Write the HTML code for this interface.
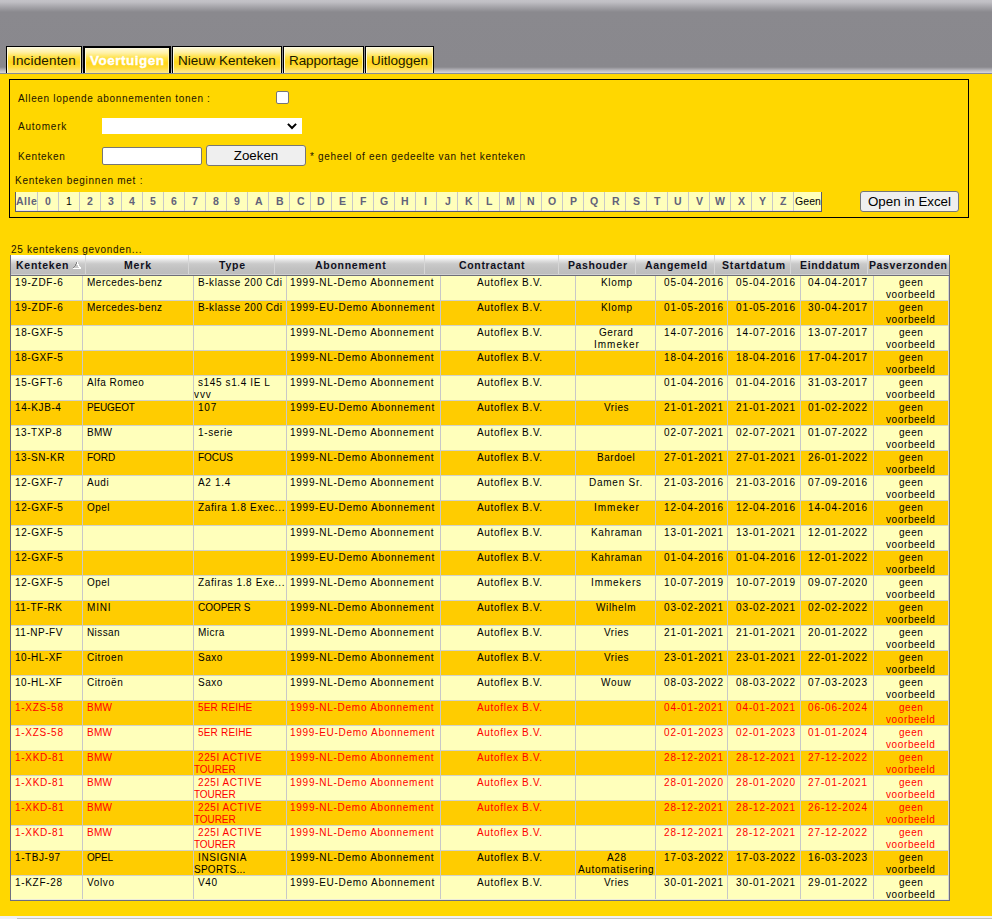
<!DOCTYPE html><html><head><meta charset="utf-8"><style>
*{margin:0;padding:0;box-sizing:border-box}
html,body{width:992px;height:919px;overflow:hidden;background:#ffd700;font-family:"Liberation Sans",sans-serif;color:#000}
.a{position:absolute}
.t{white-space:nowrap}
#hdr{left:0;top:0;width:992px;height:74px;background:linear-gradient(#c3c2c7 0px,#c0bfc4 2px,#8a898e 12px,#89888d 67px,#b3b2b8 70px,#d8d7de 73px);border-bottom:1px solid #868a98}
.tab{top:46px;height:27px;border:1px solid #000;border-bottom:none;background:linear-gradient(#fffbdc 0px,#fff1a8 5px,#ffe24a 10px,#ffd519 15px,#ffdc3c 20px,#ffe88a 25px);box-shadow:inset 1px 1px 0 #fffbe0,inset -1px 0 0 #fff3a0}
.tab.act{border:2px solid #000;border-bottom:none}
#box{left:9px;top:79px;width:960px;height:139px;border:1px solid #000}
.lbl{color:#1a1200}
.red{color:#ff0000}
.hc{color:#101020}
.ltr{top:192px;height:19px;width:21px;border-right:1px solid #c8c8c8}
</style></head><body>
<div id="hdr" class="a"></div>
<div class="a tab" style="left:6px;width:76px"></div>
<div class="a t" style="left:12px;top:53px;font-size:13.5px;letter-spacing:0.159px;line-height:16px;color:#1a1a00">Incidenten</div>
<div class="a tab act" style="left:83px;width:88px"></div>
<div class="a t" style="left:90px;top:53px;font-size:13.5px;letter-spacing:0.486px;line-height:16px;font-weight:bold;color:#fff;-webkit-text-stroke:0.35px #fff">Voertuigen</div>
<div class="a tab" style="left:172px;width:110px"></div>
<div class="a t" style="left:178px;top:53px;font-size:13.5px;letter-spacing:-0.033px;line-height:16px;color:#1a1a00">Nieuw Kenteken</div>
<div class="a tab" style="left:283px;width:81px"></div>
<div class="a t" style="left:289px;top:53px;font-size:13.5px;letter-spacing:-0.107px;line-height:16px;color:#1a1a00">Rapportage</div>
<div class="a tab" style="left:365px;width:69px"></div>
<div class="a t" style="left:371px;top:53px;font-size:13.5px;letter-spacing:0.004px;line-height:16px;color:#1a1a00">Uitloggen</div>
<div id="box" class="a"></div>
<div class="a t lbl" style="left:18px;top:93px;font-size:10px;letter-spacing:0.671px;line-height:12px">Alleen lopende abonnementen tonen :</div>
<div class="a" style="left:276px;top:91px;width:13px;height:13px;border:1px solid #767676;border-radius:2px;background:#fff"></div>
<div class="a t lbl" style="left:18px;top:121px;font-size:10px;letter-spacing:0.783px;line-height:12px">Automerk</div>
<div class="a" style="left:102px;top:118px;width:200px;height:16px;background:#fff"></div>
<svg class="a" style="left:287px;top:122px" width="11" height="8" viewBox="0 0 11 8"><path d="M0.9 1.9 L5 6 L9.1 1.9" fill="none" stroke="#000" stroke-width="2"/></svg>
<div class="a t lbl" style="left:18px;top:151px;font-size:10px;letter-spacing:0.634px;line-height:12px">Kenteken</div>
<div class="a" style="left:102px;top:147px;width:100px;height:18px;border:1px solid #767676;border-radius:2px;background:#fff"></div>
<div class="a" style="left:206px;top:145px;width:100px;height:21px;border:1px solid #767676;border-radius:3px;background:#efefef;font-size:13.33px;line-height:19px;text-align:center">Zoeken</div>
<div class="a t lbl" style="left:310px;top:151px;font-size:10px;letter-spacing:0.694px;line-height:12px">* geheel of een gedeelte van het kenteken</div>
<div class="a t lbl" style="left:15px;top:175px;font-size:10px;letter-spacing:0.738px;line-height:12px">Kenteken beginnen met :</div>
<div class="a" style="left:15px;top:192px;width:807px;height:20px;background:#ffffbb;border-left:1px solid #5a5a70;border-bottom:1px solid #5a5a70;border-right:1px solid #5a5a70;box-shadow:inset 0 -1px 0 #e8e4f0"></div>
<div class="a ltr" style="left:16px;width:22px"></div>
<div class="a t" style="left:16px;top:195px;font-size:10.5px;letter-spacing:0.496px;line-height:12px;font-weight:bold;color:#62627a">Alle</div>
<div class="a ltr" style="left:38px"></div>
<div class="a t" style="left:45px;top:195px;font-size:10.5px;letter-spacing:1.270px;line-height:12px;font-weight:bold;color:#62627a">0</div>
<div class="a ltr" style="left:59px"></div>
<div class="a t" style="left:66px;top:195px;font-size:10.5px;letter-spacing:0.520px;line-height:12px;color:#000">1</div>
<div class="a ltr" style="left:80px"></div>
<div class="a t" style="left:87px;top:195px;font-size:10.5px;letter-spacing:1.270px;line-height:12px;font-weight:bold;color:#62627a">2</div>
<div class="a ltr" style="left:101px"></div>
<div class="a t" style="left:108px;top:195px;font-size:10.5px;letter-spacing:1.270px;line-height:12px;font-weight:bold;color:#62627a">3</div>
<div class="a ltr" style="left:122px"></div>
<div class="a t" style="left:129px;top:195px;font-size:10.5px;letter-spacing:1.270px;line-height:12px;font-weight:bold;color:#62627a">4</div>
<div class="a ltr" style="left:143px"></div>
<div class="a t" style="left:150px;top:195px;font-size:10.5px;letter-spacing:1.270px;line-height:12px;font-weight:bold;color:#62627a">5</div>
<div class="a ltr" style="left:164px"></div>
<div class="a t" style="left:171px;top:195px;font-size:10.5px;letter-spacing:1.270px;line-height:12px;font-weight:bold;color:#62627a">6</div>
<div class="a ltr" style="left:185px"></div>
<div class="a t" style="left:192px;top:195px;font-size:10.5px;letter-spacing:1.270px;line-height:12px;font-weight:bold;color:#62627a">7</div>
<div class="a ltr" style="left:206px"></div>
<div class="a t" style="left:213px;top:195px;font-size:10.5px;letter-spacing:1.270px;line-height:12px;font-weight:bold;color:#62627a">8</div>
<div class="a ltr" style="left:227px"></div>
<div class="a t" style="left:234px;top:195px;font-size:10.5px;letter-spacing:1.270px;line-height:12px;font-weight:bold;color:#62627a">9</div>
<div class="a ltr" style="left:248px"></div>
<div class="a t" style="left:255px;top:195px;font-size:10.5px;letter-spacing:0.177px;line-height:12px;font-weight:bold;color:#62627a">A</div>
<div class="a ltr" style="left:269px"></div>
<div class="a t" style="left:276px;top:195px;font-size:10.5px;letter-spacing:0.037px;line-height:12px;font-weight:bold;color:#62627a">B</div>
<div class="a ltr" style="left:290px"></div>
<div class="a t" style="left:297px;top:195px;font-size:10.5px;letter-spacing:-0.343px;line-height:12px;font-weight:bold;color:#62627a">C</div>
<div class="a ltr" style="left:311px"></div>
<div class="a t" style="left:317px;top:195px;font-size:10.5px;letter-spacing:0.717px;line-height:12px;font-weight:bold;color:#62627a">D</div>
<div class="a ltr" style="left:332px"></div>
<div class="a t" style="left:339px;top:195px;font-size:10.5px;letter-spacing:-0.173px;line-height:12px;font-weight:bold;color:#62627a">E</div>
<div class="a ltr" style="left:353px"></div>
<div class="a t" style="left:360px;top:195px;font-size:10.5px;letter-spacing:0.086px;line-height:12px;font-weight:bold;color:#62627a">F</div>
<div class="a ltr" style="left:374px"></div>
<div class="a t" style="left:380px;top:195px;font-size:10.5px;letter-spacing:-0.057px;line-height:12px;font-weight:bold;color:#62627a">G</div>
<div class="a ltr" style="left:395px"></div>
<div class="a t" style="left:401px;top:195px;font-size:10.5px;letter-spacing:0.787px;line-height:12px;font-weight:bold;color:#62627a">H</div>
<div class="a ltr" style="left:416px"></div>
<div class="a t" style="left:424px;top:195px;font-size:10.5px;letter-spacing:2.543px;line-height:12px;font-weight:bold;color:#62627a">I</div>
<div class="a ltr" style="left:437px"></div>
<div class="a t" style="left:445px;top:195px;font-size:10.5px;letter-spacing:-0.290px;line-height:12px;font-weight:bold;color:#62627a">J</div>
<div class="a ltr" style="left:458px"></div>
<div class="a t" style="left:465px;top:195px;font-size:10.5px;letter-spacing:0.127px;line-height:12px;font-weight:bold;color:#62627a">K</div>
<div class="a ltr" style="left:479px"></div>
<div class="a t" style="left:486px;top:195px;font-size:10.5px;letter-spacing:-0.044px;line-height:12px;font-weight:bold;color:#62627a">L</div>
<div class="a ltr" style="left:500px"></div>
<div class="a t" style="left:506px;top:195px;font-size:10.5px;letter-spacing:0.733px;line-height:12px;font-weight:bold;color:#62627a">M</div>
<div class="a ltr" style="left:521px"></div>
<div class="a t" style="left:527px;top:195px;font-size:10.5px;letter-spacing:0.887px;line-height:12px;font-weight:bold;color:#62627a">N</div>
<div class="a ltr" style="left:542px"></div>
<div class="a t" style="left:548px;top:195px;font-size:10.5px;letter-spacing:0.333px;line-height:12px;font-weight:bold;color:#62627a">O</div>
<div class="a ltr" style="left:563px"></div>
<div class="a t" style="left:570px;top:195px;font-size:10.5px;letter-spacing:0.327px;line-height:12px;font-weight:bold;color:#62627a">P</div>
<div class="a ltr" style="left:584px"></div>
<div class="a t" style="left:590px;top:195px;font-size:10.5px;letter-spacing:0.333px;line-height:12px;font-weight:bold;color:#62627a">Q</div>
<div class="a ltr" style="left:605px"></div>
<div class="a t" style="left:612px;top:195px;font-size:10.5px;letter-spacing:0.237px;line-height:12px;font-weight:bold;color:#62627a">R</div>
<div class="a ltr" style="left:626px"></div>
<div class="a t" style="left:633px;top:195px;font-size:10.5px;letter-spacing:0.097px;line-height:12px;font-weight:bold;color:#62627a">S</div>
<div class="a ltr" style="left:647px"></div>
<div class="a t" style="left:654px;top:195px;font-size:10.5px;letter-spacing:0.406px;line-height:12px;font-weight:bold;color:#62627a">T</div>
<div class="a ltr" style="left:668px"></div>
<div class="a t" style="left:674px;top:195px;font-size:10.5px;letter-spacing:0.537px;line-height:12px;font-weight:bold;color:#62627a">U</div>
<div class="a ltr" style="left:689px"></div>
<div class="a t" style="left:696px;top:195px;font-size:10.5px;letter-spacing:0.637px;line-height:12px;font-weight:bold;color:#62627a">V</div>
<div class="a ltr" style="left:710px"></div>
<div class="a t" style="left:715px;top:195px;font-size:10.5px;letter-spacing:1.370px;line-height:12px;font-weight:bold;color:#62627a">W</div>
<div class="a ltr" style="left:731px"></div>
<div class="a t" style="left:738px;top:195px;font-size:10.5px;letter-spacing:0.697px;line-height:12px;font-weight:bold;color:#62627a">X</div>
<div class="a ltr" style="left:752px"></div>
<div class="a t" style="left:759px;top:195px;font-size:10.5px;letter-spacing:0.367px;line-height:12px;font-weight:bold;color:#62627a">Y</div>
<div class="a ltr" style="left:773px"></div>
<div class="a t" style="left:780px;top:195px;font-size:10.5px;letter-spacing:0.506px;line-height:12px;font-weight:bold;color:#62627a">Z</div>
<div class="a t" style="left:795px;top:195px;font-size:10.5px;letter-spacing:0.078px;line-height:12px;color:#000">Geen</div>
<div class="a" style="left:860px;top:191px;width:99px;height:21px;border:1px solid #767676;border-radius:3px;background:#efefef;font-size:13.33px;line-height:19px;text-align:center">Open in Excel</div>
<div class="a t lbl" style="left:11px;top:244px;font-size:10px;letter-spacing:0.696px;line-height:12px">25 kentekens gevonden...</div>
<div class="a" style="left:10px;top:255px;width:940px;height:21px;background:linear-gradient(#ffffff 0px,#fbfbfb 3px,#dedede 6px,#c9c9c9 9px,#c1c1c1 14px,#bdbdbd 19px);border-left:1px solid #6e6e80;border-right:1px solid #6e6e80;border-bottom:1px solid #6e6e78;box-shadow:inset 0 -1px 0 #d0d0d0"></div>
<div class="a" style="left:85px;top:255px;width:1px;height:19px;background:#d6d6d6"></div>
<div class="a" style="left:188px;top:255px;width:1px;height:19px;background:#d6d6d6"></div>
<div class="a" style="left:274px;top:255px;width:1px;height:19px;background:#d6d6d6"></div>
<div class="a" style="left:424px;top:255px;width:1px;height:19px;background:#d6d6d6"></div>
<div class="a" style="left:558px;top:255px;width:1px;height:19px;background:#d6d6d6"></div>
<div class="a" style="left:635px;top:255px;width:1px;height:19px;background:#d6d6d6"></div>
<div class="a" style="left:714px;top:255px;width:1px;height:19px;background:#d6d6d6"></div>
<div class="a" style="left:790px;top:255px;width:1px;height:19px;background:#d6d6d6"></div>
<div class="a" style="left:867px;top:255px;width:1px;height:19px;background:#d6d6d6"></div>
<div class="a t hc" style="left:16px;top:259px;font-size:10.5px;letter-spacing:0.733px;line-height:12px;font-weight:bold">Kenteken</div>
<div class="a t hc" style="left:124px;top:259px;font-size:10.5px;letter-spacing:0.820px;line-height:12px;font-weight:bold">Merk</div>
<div class="a t hc" style="left:219px;top:259px;font-size:10.5px;letter-spacing:0.808px;line-height:12px;font-weight:bold">Type</div>
<div class="a t hc" style="left:315px;top:259px;font-size:10.5px;letter-spacing:0.724px;line-height:12px;font-weight:bold">Abonnement</div>
<div class="a t hc" style="left:459px;top:259px;font-size:10.5px;letter-spacing:0.666px;line-height:12px;font-weight:bold">Contractant</div>
<div class="a t hc" style="left:568px;top:259px;font-size:10.5px;letter-spacing:0.598px;line-height:12px;font-weight:bold">Pashouder</div>
<div class="a t hc" style="left:645px;top:259px;font-size:10.5px;letter-spacing:0.692px;line-height:12px;font-weight:bold">Aangemeld</div>
<div class="a t hc" style="left:722px;top:259px;font-size:10.5px;letter-spacing:0.838px;line-height:12px;font-weight:bold">Startdatum</div>
<div class="a t hc" style="left:800px;top:259px;font-size:10.5px;letter-spacing:0.671px;line-height:12px;font-weight:bold">Einddatum</div>
<div class="a t hc" style="left:869px;top:259px;font-size:10.5px;letter-spacing:0.621px;line-height:12px;font-weight:bold">Pasverzonden</div>
<svg class="a" style="left:72px;top:261px" width="10" height="9" shape-rendering="crispEdges"><rect x="4" y="1" width="1" height="2" fill="#858585"/><rect x="5" y="1" width="1" height="2" fill="#ffffff"/><rect x="3" y="3" width="1" height="1" fill="#858585"/><rect x="4" y="3" width="1" height="1" fill="#c8c8c8"/><rect x="5" y="3" width="2" height="1" fill="#ffffff"/><rect x="3" y="4" width="1" height="1" fill="#858585"/><rect x="4" y="4" width="2" height="1" fill="#c8c8c8"/><rect x="6" y="4" width="1" height="1" fill="#ffffff"/><rect x="2" y="5" width="1" height="1" fill="#858585"/><rect x="3" y="5" width="3" height="1" fill="#c8c8c8"/><rect x="6" y="5" width="2" height="1" fill="#ffffff"/><rect x="1" y="6" width="1" height="1" fill="#858585"/><rect x="2" y="6" width="5" height="1" fill="#c8c8c8"/><rect x="7" y="6" width="2" height="1" fill="#ffffff"/><rect x="1" y="7" width="8" height="1" fill="#ffffff"/></svg>
<div class="a" style="left:10px;top:276px;width:940px;height:625px;border:1px solid #6e6e80;border-top:none"></div>
<div class="a" style="left:11px;top:276px;width:938px;height:25px;background:#ffffbb;border-bottom:1px solid #d2d2c8"></div>
<div class="a t" style="left:15px;top:277px;font-size:10px;letter-spacing:0.711px;line-height:12px">19-ZDF-6</div>
<div class="a t" style="left:87px;top:277px;font-size:10px;letter-spacing:0.509px;line-height:12px">Mercedes-benz</div>
<div class="a t" style="left:198px;top:277px;font-size:10px;letter-spacing:0.558px;line-height:12px">B-klasse 200 Cdi</div>
<div class="a t" style="left:290px;top:277px;font-size:10px;letter-spacing:0.738px;line-height:12px">1999-NL-Demo Abonnement</div>
<div class="a t" style="left:477px;top:277px;font-size:10px;letter-spacing:0.687px;line-height:12px">Autoflex B.V.</div>
<div class="a t" style="left:601px;top:277px;font-size:10px;letter-spacing:0.671px;line-height:12px">Klomp</div>
<div class="a t" style="left:664px;top:277px;font-size:10px;letter-spacing:0.881px;line-height:12px">05-04-2016</div>
<div class="a t" style="left:736px;top:277px;font-size:10px;letter-spacing:0.881px;line-height:12px">05-04-2016</div>
<div class="a t" style="left:808px;top:277px;font-size:10px;letter-spacing:0.881px;line-height:12px">04-04-2017</div>
<div class="a t" style="left:899px;top:277px;font-size:10px;letter-spacing:0.558px;line-height:12px">geen</div>
<div class="a t" style="left:886px;top:289px;font-size:10px;letter-spacing:0.614px;line-height:12px">voorbeeld</div>
<div class="a" style="left:11px;top:301px;width:938px;height:25px;background:#ffcc00;border-bottom:1px solid #d2d2c8"></div>
<div class="a t" style="left:15px;top:302px;font-size:10px;letter-spacing:0.711px;line-height:12px">19-ZDF-6</div>
<div class="a t" style="left:87px;top:302px;font-size:10px;letter-spacing:0.509px;line-height:12px">Mercedes-benz</div>
<div class="a t" style="left:198px;top:302px;font-size:10px;letter-spacing:0.558px;line-height:12px">B-klasse 200 Cdi</div>
<div class="a t" style="left:290px;top:302px;font-size:10px;letter-spacing:0.716px;line-height:12px">1999-EU-Demo Abonnement</div>
<div class="a t" style="left:477px;top:302px;font-size:10px;letter-spacing:0.687px;line-height:12px">Autoflex B.V.</div>
<div class="a t" style="left:601px;top:302px;font-size:10px;letter-spacing:0.671px;line-height:12px">Klomp</div>
<div class="a t" style="left:664px;top:302px;font-size:10px;letter-spacing:0.881px;line-height:12px">01-05-2016</div>
<div class="a t" style="left:736px;top:302px;font-size:10px;letter-spacing:0.881px;line-height:12px">01-05-2016</div>
<div class="a t" style="left:808px;top:302px;font-size:10px;letter-spacing:0.881px;line-height:12px">30-04-2017</div>
<div class="a t" style="left:899px;top:302px;font-size:10px;letter-spacing:0.558px;line-height:12px">geen</div>
<div class="a t" style="left:886px;top:314px;font-size:10px;letter-spacing:0.614px;line-height:12px">voorbeeld</div>
<div class="a" style="left:11px;top:326px;width:938px;height:25px;background:#ffffbb;border-bottom:1px solid #d2d2c8"></div>
<div class="a t" style="left:15px;top:327px;font-size:10px;letter-spacing:0.576px;line-height:12px">18-GXF-5</div>
<div class="a t" style="left:290px;top:327px;font-size:10px;letter-spacing:0.738px;line-height:12px">1999-NL-Demo Abonnement</div>
<div class="a t" style="left:477px;top:327px;font-size:10px;letter-spacing:0.687px;line-height:12px">Autoflex B.V.</div>
<div class="a t" style="left:599px;top:327px;font-size:10px;letter-spacing:0.561px;line-height:12px">Gerard</div>
<div class="a t" style="left:594px;top:339px;font-size:10px;letter-spacing:0.984px;line-height:12px">Immeker</div>
<div class="a t" style="left:664px;top:327px;font-size:10px;letter-spacing:0.881px;line-height:12px">14-07-2016</div>
<div class="a t" style="left:736px;top:327px;font-size:10px;letter-spacing:0.881px;line-height:12px">14-07-2016</div>
<div class="a t" style="left:808px;top:327px;font-size:10px;letter-spacing:0.881px;line-height:12px">13-07-2017</div>
<div class="a t" style="left:899px;top:327px;font-size:10px;letter-spacing:0.558px;line-height:12px">geen</div>
<div class="a t" style="left:886px;top:339px;font-size:10px;letter-spacing:0.614px;line-height:12px">voorbeeld</div>
<div class="a" style="left:11px;top:351px;width:938px;height:25px;background:#ffcc00;border-bottom:1px solid #d2d2c8"></div>
<div class="a t" style="left:15px;top:352px;font-size:10px;letter-spacing:0.576px;line-height:12px">18-GXF-5</div>
<div class="a t" style="left:290px;top:352px;font-size:10px;letter-spacing:0.738px;line-height:12px">1999-NL-Demo Abonnement</div>
<div class="a t" style="left:477px;top:352px;font-size:10px;letter-spacing:0.687px;line-height:12px">Autoflex B.V.</div>
<div class="a t" style="left:664px;top:352px;font-size:10px;letter-spacing:0.881px;line-height:12px">18-04-2016</div>
<div class="a t" style="left:736px;top:352px;font-size:10px;letter-spacing:0.881px;line-height:12px">18-04-2016</div>
<div class="a t" style="left:808px;top:352px;font-size:10px;letter-spacing:0.881px;line-height:12px">17-04-2017</div>
<div class="a t" style="left:899px;top:352px;font-size:10px;letter-spacing:0.558px;line-height:12px">geen</div>
<div class="a t" style="left:886px;top:364px;font-size:10px;letter-spacing:0.614px;line-height:12px">voorbeeld</div>
<div class="a" style="left:11px;top:376px;width:938px;height:25px;background:#ffffbb;border-bottom:1px solid #d2d2c8"></div>
<div class="a t" style="left:15px;top:377px;font-size:10px;letter-spacing:0.629px;line-height:12px">15-GFT-6</div>
<div class="a t" style="left:87px;top:377px;font-size:10px;letter-spacing:0.516px;line-height:12px">Alfa Romeo</div>
<div class="a t" style="left:198px;top:377px;font-size:10px;letter-spacing:0.614px;line-height:12px">s145 s1.4 IE L</div>
<div class="a t" style="left:194px;top:389px;font-size:10px;letter-spacing:0.920px;line-height:12px">vvv</div>
<div class="a t" style="left:290px;top:377px;font-size:10px;letter-spacing:0.738px;line-height:12px">1999-NL-Demo Abonnement</div>
<div class="a t" style="left:477px;top:377px;font-size:10px;letter-spacing:0.687px;line-height:12px">Autoflex B.V.</div>
<div class="a t" style="left:664px;top:377px;font-size:10px;letter-spacing:0.881px;line-height:12px">01-04-2016</div>
<div class="a t" style="left:736px;top:377px;font-size:10px;letter-spacing:0.881px;line-height:12px">01-04-2016</div>
<div class="a t" style="left:808px;top:377px;font-size:10px;letter-spacing:0.881px;line-height:12px">31-03-2017</div>
<div class="a t" style="left:899px;top:377px;font-size:10px;letter-spacing:0.558px;line-height:12px">geen</div>
<div class="a t" style="left:886px;top:389px;font-size:10px;letter-spacing:0.614px;line-height:12px">voorbeeld</div>
<div class="a" style="left:11px;top:401px;width:938px;height:25px;background:#ffcc00;border-bottom:1px solid #d2d2c8"></div>
<div class="a t" style="left:15px;top:402px;font-size:10px;letter-spacing:0.602px;line-height:12px">14-KJB-4</div>
<div class="a t" style="left:87px;top:402px;font-size:10px;letter-spacing:-0.161px;line-height:12px">PEUGEOT</div>
<div class="a t" style="left:198px;top:402px;font-size:10px;letter-spacing:0.798px;line-height:12px">107</div>
<div class="a t" style="left:290px;top:402px;font-size:10px;letter-spacing:0.716px;line-height:12px">1999-EU-Demo Abonnement</div>
<div class="a t" style="left:477px;top:402px;font-size:10px;letter-spacing:0.687px;line-height:12px">Autoflex B.V.</div>
<div class="a t" style="left:604px;top:402px;font-size:10px;letter-spacing:0.522px;line-height:12px">Vries</div>
<div class="a t" style="left:664px;top:402px;font-size:10px;letter-spacing:0.881px;line-height:12px">21-01-2021</div>
<div class="a t" style="left:736px;top:402px;font-size:10px;letter-spacing:0.881px;line-height:12px">21-01-2021</div>
<div class="a t" style="left:808px;top:402px;font-size:10px;letter-spacing:0.881px;line-height:12px">01-02-2022</div>
<div class="a t" style="left:899px;top:402px;font-size:10px;letter-spacing:0.558px;line-height:12px">geen</div>
<div class="a t" style="left:886px;top:414px;font-size:10px;letter-spacing:0.614px;line-height:12px">voorbeeld</div>
<div class="a" style="left:11px;top:426px;width:938px;height:25px;background:#ffffbb;border-bottom:1px solid #d2d2c8"></div>
<div class="a t" style="left:15px;top:427px;font-size:10px;letter-spacing:0.551px;line-height:12px">13-TXP-8</div>
<div class="a t" style="left:87px;top:427px;font-size:10px;letter-spacing:0.247px;line-height:12px">BMW</div>
<div class="a t" style="left:198px;top:427px;font-size:10px;letter-spacing:0.639px;line-height:12px">1-serie</div>
<div class="a t" style="left:290px;top:427px;font-size:10px;letter-spacing:0.738px;line-height:12px">1999-NL-Demo Abonnement</div>
<div class="a t" style="left:477px;top:427px;font-size:10px;letter-spacing:0.687px;line-height:12px">Autoflex B.V.</div>
<div class="a t" style="left:664px;top:427px;font-size:10px;letter-spacing:0.881px;line-height:12px">02-07-2021</div>
<div class="a t" style="left:736px;top:427px;font-size:10px;letter-spacing:0.881px;line-height:12px">02-07-2021</div>
<div class="a t" style="left:808px;top:427px;font-size:10px;letter-spacing:0.881px;line-height:12px">01-07-2022</div>
<div class="a t" style="left:899px;top:427px;font-size:10px;letter-spacing:0.558px;line-height:12px">geen</div>
<div class="a t" style="left:886px;top:439px;font-size:10px;letter-spacing:0.614px;line-height:12px">voorbeeld</div>
<div class="a" style="left:11px;top:451px;width:938px;height:25px;background:#ffcc00;border-bottom:1px solid #d2d2c8"></div>
<div class="a t" style="left:15px;top:452px;font-size:10px;letter-spacing:0.554px;line-height:12px">13-SN-KR</div>
<div class="a t" style="left:87px;top:452px;font-size:10px;letter-spacing:-0.013px;line-height:12px">FORD</div>
<div class="a t" style="left:198px;top:452px;font-size:10px;letter-spacing:-0.048px;line-height:12px">FOCUS</div>
<div class="a t" style="left:290px;top:452px;font-size:10px;letter-spacing:0.738px;line-height:12px">1999-NL-Demo Abonnement</div>
<div class="a t" style="left:477px;top:452px;font-size:10px;letter-spacing:0.687px;line-height:12px">Autoflex B.V.</div>
<div class="a t" style="left:597px;top:452px;font-size:10px;letter-spacing:0.525px;line-height:12px">Bardoel</div>
<div class="a t" style="left:664px;top:452px;font-size:10px;letter-spacing:0.881px;line-height:12px">27-01-2021</div>
<div class="a t" style="left:736px;top:452px;font-size:10px;letter-spacing:0.881px;line-height:12px">27-01-2021</div>
<div class="a t" style="left:808px;top:452px;font-size:10px;letter-spacing:0.881px;line-height:12px">26-01-2022</div>
<div class="a t" style="left:899px;top:452px;font-size:10px;letter-spacing:0.558px;line-height:12px">geen</div>
<div class="a t" style="left:886px;top:464px;font-size:10px;letter-spacing:0.614px;line-height:12px">voorbeeld</div>
<div class="a" style="left:11px;top:476px;width:938px;height:25px;background:#ffffbb;border-bottom:1px solid #d2d2c8"></div>
<div class="a t" style="left:15px;top:477px;font-size:10px;letter-spacing:0.576px;line-height:12px">12-GXF-7</div>
<div class="a t" style="left:87px;top:477px;font-size:10px;letter-spacing:0.531px;line-height:12px">Audi</div>
<div class="a t" style="left:198px;top:477px;font-size:10px;letter-spacing:0.695px;line-height:12px">A2 1.4</div>
<div class="a t" style="left:290px;top:477px;font-size:10px;letter-spacing:0.738px;line-height:12px">1999-NL-Demo Abonnement</div>
<div class="a t" style="left:477px;top:477px;font-size:10px;letter-spacing:0.687px;line-height:12px">Autoflex B.V.</div>
<div class="a t" style="left:589px;top:477px;font-size:10px;letter-spacing:0.752px;line-height:12px">Damen Sr.</div>
<div class="a t" style="left:664px;top:477px;font-size:10px;letter-spacing:0.881px;line-height:12px">21-03-2016</div>
<div class="a t" style="left:736px;top:477px;font-size:10px;letter-spacing:0.881px;line-height:12px">21-03-2016</div>
<div class="a t" style="left:808px;top:477px;font-size:10px;letter-spacing:0.881px;line-height:12px">07-09-2016</div>
<div class="a t" style="left:899px;top:477px;font-size:10px;letter-spacing:0.558px;line-height:12px">geen</div>
<div class="a t" style="left:886px;top:489px;font-size:10px;letter-spacing:0.614px;line-height:12px">voorbeeld</div>
<div class="a" style="left:11px;top:501px;width:938px;height:25px;background:#ffcc00;border-bottom:1px solid #d2d2c8"></div>
<div class="a t" style="left:15px;top:502px;font-size:10px;letter-spacing:0.576px;line-height:12px">12-GXF-5</div>
<div class="a t" style="left:87px;top:502px;font-size:10px;letter-spacing:0.419px;line-height:12px">Opel</div>
<div class="a t" style="left:198px;top:502px;font-size:10px;letter-spacing:0.641px;line-height:12px">Zafira 1.8 Exec...</div>
<div class="a t" style="left:290px;top:502px;font-size:10px;letter-spacing:0.716px;line-height:12px">1999-EU-Demo Abonnement</div>
<div class="a t" style="left:477px;top:502px;font-size:10px;letter-spacing:0.687px;line-height:12px">Autoflex B.V.</div>
<div class="a t" style="left:594px;top:502px;font-size:10px;letter-spacing:0.984px;line-height:12px">Immeker</div>
<div class="a t" style="left:664px;top:502px;font-size:10px;letter-spacing:0.881px;line-height:12px">12-04-2016</div>
<div class="a t" style="left:736px;top:502px;font-size:10px;letter-spacing:0.881px;line-height:12px">12-04-2016</div>
<div class="a t" style="left:808px;top:502px;font-size:10px;letter-spacing:0.881px;line-height:12px">14-04-2016</div>
<div class="a t" style="left:899px;top:502px;font-size:10px;letter-spacing:0.558px;line-height:12px">geen</div>
<div class="a t" style="left:886px;top:514px;font-size:10px;letter-spacing:0.614px;line-height:12px">voorbeeld</div>
<div class="a" style="left:11px;top:526px;width:938px;height:25px;background:#ffffbb;border-bottom:1px solid #d2d2c8"></div>
<div class="a t" style="left:15px;top:527px;font-size:10px;letter-spacing:0.576px;line-height:12px">12-GXF-5</div>
<div class="a t" style="left:290px;top:527px;font-size:10px;letter-spacing:0.738px;line-height:12px">1999-NL-Demo Abonnement</div>
<div class="a t" style="left:477px;top:527px;font-size:10px;letter-spacing:0.687px;line-height:12px">Autoflex B.V.</div>
<div class="a t" style="left:591px;top:527px;font-size:10px;letter-spacing:0.685px;line-height:12px">Kahraman</div>
<div class="a t" style="left:664px;top:527px;font-size:10px;letter-spacing:0.881px;line-height:12px">13-01-2021</div>
<div class="a t" style="left:736px;top:527px;font-size:10px;letter-spacing:0.881px;line-height:12px">13-01-2021</div>
<div class="a t" style="left:808px;top:527px;font-size:10px;letter-spacing:0.881px;line-height:12px">12-01-2022</div>
<div class="a t" style="left:899px;top:527px;font-size:10px;letter-spacing:0.558px;line-height:12px">geen</div>
<div class="a t" style="left:886px;top:539px;font-size:10px;letter-spacing:0.614px;line-height:12px">voorbeeld</div>
<div class="a" style="left:11px;top:551px;width:938px;height:25px;background:#ffcc00;border-bottom:1px solid #d2d2c8"></div>
<div class="a t" style="left:15px;top:552px;font-size:10px;letter-spacing:0.576px;line-height:12px">12-GXF-5</div>
<div class="a t" style="left:290px;top:552px;font-size:10px;letter-spacing:0.716px;line-height:12px">1999-EU-Demo Abonnement</div>
<div class="a t" style="left:477px;top:552px;font-size:10px;letter-spacing:0.687px;line-height:12px">Autoflex B.V.</div>
<div class="a t" style="left:591px;top:552px;font-size:10px;letter-spacing:0.685px;line-height:12px">Kahraman</div>
<div class="a t" style="left:664px;top:552px;font-size:10px;letter-spacing:0.881px;line-height:12px">01-04-2016</div>
<div class="a t" style="left:736px;top:552px;font-size:10px;letter-spacing:0.881px;line-height:12px">01-04-2016</div>
<div class="a t" style="left:808px;top:552px;font-size:10px;letter-spacing:0.881px;line-height:12px">12-01-2022</div>
<div class="a t" style="left:899px;top:552px;font-size:10px;letter-spacing:0.558px;line-height:12px">geen</div>
<div class="a t" style="left:886px;top:564px;font-size:10px;letter-spacing:0.614px;line-height:12px">voorbeeld</div>
<div class="a" style="left:11px;top:576px;width:938px;height:25px;background:#ffffbb;border-bottom:1px solid #d2d2c8"></div>
<div class="a t" style="left:15px;top:577px;font-size:10px;letter-spacing:0.576px;line-height:12px">12-GXF-5</div>
<div class="a t" style="left:87px;top:577px;font-size:10px;letter-spacing:0.419px;line-height:12px">Opel</div>
<div class="a t" style="left:198px;top:577px;font-size:10px;letter-spacing:0.641px;line-height:12px">Zafiras 1.8 Exe...</div>
<div class="a t" style="left:290px;top:577px;font-size:10px;letter-spacing:0.738px;line-height:12px">1999-NL-Demo Abonnement</div>
<div class="a t" style="left:477px;top:577px;font-size:10px;letter-spacing:0.687px;line-height:12px">Autoflex B.V.</div>
<div class="a t" style="left:591px;top:577px;font-size:10px;letter-spacing:0.887px;line-height:12px">Immekers</div>
<div class="a t" style="left:664px;top:577px;font-size:10px;letter-spacing:0.881px;line-height:12px">10-07-2019</div>
<div class="a t" style="left:736px;top:577px;font-size:10px;letter-spacing:0.881px;line-height:12px">10-07-2019</div>
<div class="a t" style="left:808px;top:577px;font-size:10px;letter-spacing:0.881px;line-height:12px">09-07-2020</div>
<div class="a t" style="left:899px;top:577px;font-size:10px;letter-spacing:0.558px;line-height:12px">geen</div>
<div class="a t" style="left:886px;top:589px;font-size:10px;letter-spacing:0.614px;line-height:12px">voorbeeld</div>
<div class="a" style="left:11px;top:601px;width:938px;height:25px;background:#ffcc00;border-bottom:1px solid #d2d2c8"></div>
<div class="a t" style="left:15px;top:602px;font-size:10px;letter-spacing:0.555px;line-height:12px">11-TF-RK</div>
<div class="a t" style="left:87px;top:602px;font-size:10px;letter-spacing:0.805px;line-height:12px">MINI</div>
<div class="a t" style="left:198px;top:602px;font-size:10px;letter-spacing:-0.051px;line-height:12px">COOPER S</div>
<div class="a t" style="left:290px;top:602px;font-size:10px;letter-spacing:0.738px;line-height:12px">1999-NL-Demo Abonnement</div>
<div class="a t" style="left:477px;top:602px;font-size:10px;letter-spacing:0.687px;line-height:12px">Autoflex B.V.</div>
<div class="a t" style="left:596px;top:602px;font-size:10px;letter-spacing:0.653px;line-height:12px">Wilhelm</div>
<div class="a t" style="left:664px;top:602px;font-size:10px;letter-spacing:0.881px;line-height:12px">03-02-2021</div>
<div class="a t" style="left:736px;top:602px;font-size:10px;letter-spacing:0.881px;line-height:12px">03-02-2021</div>
<div class="a t" style="left:808px;top:602px;font-size:10px;letter-spacing:0.881px;line-height:12px">02-02-2022</div>
<div class="a t" style="left:899px;top:602px;font-size:10px;letter-spacing:0.558px;line-height:12px">geen</div>
<div class="a t" style="left:886px;top:614px;font-size:10px;letter-spacing:0.614px;line-height:12px">voorbeeld</div>
<div class="a" style="left:11px;top:626px;width:938px;height:25px;background:#ffffbb;border-bottom:1px solid #d2d2c8"></div>
<div class="a t" style="left:15px;top:627px;font-size:10px;letter-spacing:0.524px;line-height:12px">11-NP-FV</div>
<div class="a t" style="left:87px;top:627px;font-size:10px;letter-spacing:0.402px;line-height:12px">Nissan</div>
<div class="a t" style="left:198px;top:627px;font-size:10px;letter-spacing:0.443px;line-height:12px">Micra</div>
<div class="a t" style="left:290px;top:627px;font-size:10px;letter-spacing:0.738px;line-height:12px">1999-NL-Demo Abonnement</div>
<div class="a t" style="left:477px;top:627px;font-size:10px;letter-spacing:0.687px;line-height:12px">Autoflex B.V.</div>
<div class="a t" style="left:604px;top:627px;font-size:10px;letter-spacing:0.522px;line-height:12px">Vries</div>
<div class="a t" style="left:664px;top:627px;font-size:10px;letter-spacing:0.881px;line-height:12px">21-01-2021</div>
<div class="a t" style="left:736px;top:627px;font-size:10px;letter-spacing:0.881px;line-height:12px">21-01-2021</div>
<div class="a t" style="left:808px;top:627px;font-size:10px;letter-spacing:0.881px;line-height:12px">20-01-2022</div>
<div class="a t" style="left:899px;top:627px;font-size:10px;letter-spacing:0.558px;line-height:12px">geen</div>
<div class="a t" style="left:886px;top:639px;font-size:10px;letter-spacing:0.614px;line-height:12px">voorbeeld</div>
<div class="a" style="left:11px;top:651px;width:938px;height:25px;background:#ffcc00;border-bottom:1px solid #d2d2c8"></div>
<div class="a t" style="left:15px;top:652px;font-size:10px;letter-spacing:0.517px;line-height:12px">10-HL-XF</div>
<div class="a t" style="left:87px;top:652px;font-size:10px;letter-spacing:0.579px;line-height:12px">Citroen</div>
<div class="a t" style="left:198px;top:652px;font-size:10px;letter-spacing:0.512px;line-height:12px">Saxo</div>
<div class="a t" style="left:290px;top:652px;font-size:10px;letter-spacing:0.738px;line-height:12px">1999-NL-Demo Abonnement</div>
<div class="a t" style="left:477px;top:652px;font-size:10px;letter-spacing:0.687px;line-height:12px">Autoflex B.V.</div>
<div class="a t" style="left:604px;top:652px;font-size:10px;letter-spacing:0.522px;line-height:12px">Vries</div>
<div class="a t" style="left:664px;top:652px;font-size:10px;letter-spacing:0.881px;line-height:12px">23-01-2021</div>
<div class="a t" style="left:736px;top:652px;font-size:10px;letter-spacing:0.881px;line-height:12px">23-01-2021</div>
<div class="a t" style="left:808px;top:652px;font-size:10px;letter-spacing:0.881px;line-height:12px">22-01-2022</div>
<div class="a t" style="left:899px;top:652px;font-size:10px;letter-spacing:0.558px;line-height:12px">geen</div>
<div class="a t" style="left:886px;top:664px;font-size:10px;letter-spacing:0.614px;line-height:12px">voorbeeld</div>
<div class="a" style="left:11px;top:676px;width:938px;height:25px;background:#ffffbb;border-bottom:1px solid #d2d2c8"></div>
<div class="a t" style="left:15px;top:677px;font-size:10px;letter-spacing:0.517px;line-height:12px">10-HL-XF</div>
<div class="a t" style="left:87px;top:677px;font-size:10px;letter-spacing:0.579px;line-height:12px">Citro&euml;n</div>
<div class="a t" style="left:198px;top:677px;font-size:10px;letter-spacing:0.512px;line-height:12px">Saxo</div>
<div class="a t" style="left:290px;top:677px;font-size:10px;letter-spacing:0.738px;line-height:12px">1999-NL-Demo Abonnement</div>
<div class="a t" style="left:477px;top:677px;font-size:10px;letter-spacing:0.687px;line-height:12px">Autoflex B.V.</div>
<div class="a t" style="left:601px;top:677px;font-size:10px;letter-spacing:0.717px;line-height:12px">Wouw</div>
<div class="a t" style="left:664px;top:677px;font-size:10px;letter-spacing:0.881px;line-height:12px">08-03-2022</div>
<div class="a t" style="left:736px;top:677px;font-size:10px;letter-spacing:0.881px;line-height:12px">08-03-2022</div>
<div class="a t" style="left:808px;top:677px;font-size:10px;letter-spacing:0.881px;line-height:12px">07-03-2023</div>
<div class="a t" style="left:899px;top:677px;font-size:10px;letter-spacing:0.558px;line-height:12px">geen</div>
<div class="a t" style="left:886px;top:689px;font-size:10px;letter-spacing:0.614px;line-height:12px">voorbeeld</div>
<div class="a" style="left:11px;top:701px;width:938px;height:25px;background:#ffcc00;border-bottom:1px solid #d2d2c8"></div>
<div class="a t red" style="left:15px;top:702px;font-size:10px;letter-spacing:0.738px;line-height:12px">1-XZS-58</div>
<div class="a t red" style="left:87px;top:702px;font-size:10px;letter-spacing:0.247px;line-height:12px">BMW</div>
<div class="a t red" style="left:198px;top:702px;font-size:10px;letter-spacing:0.185px;line-height:12px">5ER REIHE</div>
<div class="a t red" style="left:290px;top:702px;font-size:10px;letter-spacing:0.738px;line-height:12px">1999-NL-Demo Abonnement</div>
<div class="a t red" style="left:477px;top:702px;font-size:10px;letter-spacing:0.687px;line-height:12px">Autoflex B.V.</div>
<div class="a t red" style="left:664px;top:702px;font-size:10px;letter-spacing:0.881px;line-height:12px">04-01-2021</div>
<div class="a t red" style="left:736px;top:702px;font-size:10px;letter-spacing:0.881px;line-height:12px">04-01-2021</div>
<div class="a t red" style="left:808px;top:702px;font-size:10px;letter-spacing:0.881px;line-height:12px">06-06-2024</div>
<div class="a t red" style="left:899px;top:702px;font-size:10px;letter-spacing:0.558px;line-height:12px">geen</div>
<div class="a t red" style="left:886px;top:714px;font-size:10px;letter-spacing:0.614px;line-height:12px">voorbeeld</div>
<div class="a" style="left:11px;top:726px;width:938px;height:25px;background:#ffffbb;border-bottom:1px solid #d2d2c8"></div>
<div class="a t red" style="left:15px;top:727px;font-size:10px;letter-spacing:0.738px;line-height:12px">1-XZS-58</div>
<div class="a t red" style="left:87px;top:727px;font-size:10px;letter-spacing:0.247px;line-height:12px">BMW</div>
<div class="a t red" style="left:198px;top:727px;font-size:10px;letter-spacing:0.185px;line-height:12px">5ER REIHE</div>
<div class="a t red" style="left:290px;top:727px;font-size:10px;letter-spacing:0.716px;line-height:12px">1999-EU-Demo Abonnement</div>
<div class="a t red" style="left:477px;top:727px;font-size:10px;letter-spacing:0.687px;line-height:12px">Autoflex B.V.</div>
<div class="a t red" style="left:664px;top:727px;font-size:10px;letter-spacing:0.881px;line-height:12px">02-01-2023</div>
<div class="a t red" style="left:736px;top:727px;font-size:10px;letter-spacing:0.881px;line-height:12px">02-01-2023</div>
<div class="a t red" style="left:808px;top:727px;font-size:10px;letter-spacing:0.881px;line-height:12px">01-01-2024</div>
<div class="a t red" style="left:899px;top:727px;font-size:10px;letter-spacing:0.558px;line-height:12px">geen</div>
<div class="a t red" style="left:886px;top:739px;font-size:10px;letter-spacing:0.614px;line-height:12px">voorbeeld</div>
<div class="a" style="left:11px;top:751px;width:938px;height:25px;background:#ffcc00;border-bottom:1px solid #d2d2c8"></div>
<div class="a t red" style="left:15px;top:752px;font-size:10px;letter-spacing:0.718px;line-height:12px">1-XKD-81</div>
<div class="a t red" style="left:87px;top:752px;font-size:10px;letter-spacing:0.247px;line-height:12px">BMW</div>
<div class="a t red" style="left:198px;top:752px;font-size:10px;letter-spacing:0.577px;line-height:12px">225I ACTIVE</div>
<div class="a t red" style="left:194px;top:764px;font-size:10px;letter-spacing:-0.079px;line-height:12px">TOURER</div>
<div class="a t red" style="left:290px;top:752px;font-size:10px;letter-spacing:0.738px;line-height:12px">1999-NL-Demo Abonnement</div>
<div class="a t red" style="left:477px;top:752px;font-size:10px;letter-spacing:0.687px;line-height:12px">Autoflex B.V.</div>
<div class="a t red" style="left:664px;top:752px;font-size:10px;letter-spacing:0.881px;line-height:12px">28-12-2021</div>
<div class="a t red" style="left:736px;top:752px;font-size:10px;letter-spacing:0.881px;line-height:12px">28-12-2021</div>
<div class="a t red" style="left:808px;top:752px;font-size:10px;letter-spacing:0.881px;line-height:12px">27-12-2022</div>
<div class="a t red" style="left:899px;top:752px;font-size:10px;letter-spacing:0.558px;line-height:12px">geen</div>
<div class="a t red" style="left:886px;top:764px;font-size:10px;letter-spacing:0.614px;line-height:12px">voorbeeld</div>
<div class="a" style="left:11px;top:776px;width:938px;height:25px;background:#ffffbb;border-bottom:1px solid #d2d2c8"></div>
<div class="a t red" style="left:15px;top:777px;font-size:10px;letter-spacing:0.718px;line-height:12px">1-XKD-81</div>
<div class="a t red" style="left:87px;top:777px;font-size:10px;letter-spacing:0.247px;line-height:12px">BMW</div>
<div class="a t red" style="left:198px;top:777px;font-size:10px;letter-spacing:0.577px;line-height:12px">225I ACTIVE</div>
<div class="a t red" style="left:194px;top:789px;font-size:10px;letter-spacing:-0.079px;line-height:12px">TOURER</div>
<div class="a t red" style="left:290px;top:777px;font-size:10px;letter-spacing:0.738px;line-height:12px">1999-NL-Demo Abonnement</div>
<div class="a t red" style="left:477px;top:777px;font-size:10px;letter-spacing:0.687px;line-height:12px">Autoflex B.V.</div>
<div class="a t red" style="left:664px;top:777px;font-size:10px;letter-spacing:0.881px;line-height:12px">28-01-2020</div>
<div class="a t red" style="left:736px;top:777px;font-size:10px;letter-spacing:0.881px;line-height:12px">28-01-2020</div>
<div class="a t red" style="left:808px;top:777px;font-size:10px;letter-spacing:0.881px;line-height:12px">27-01-2021</div>
<div class="a t red" style="left:899px;top:777px;font-size:10px;letter-spacing:0.558px;line-height:12px">geen</div>
<div class="a t red" style="left:886px;top:789px;font-size:10px;letter-spacing:0.614px;line-height:12px">voorbeeld</div>
<div class="a" style="left:11px;top:801px;width:938px;height:25px;background:#ffcc00;border-bottom:1px solid #d2d2c8"></div>
<div class="a t red" style="left:15px;top:802px;font-size:10px;letter-spacing:0.718px;line-height:12px">1-XKD-81</div>
<div class="a t red" style="left:87px;top:802px;font-size:10px;letter-spacing:0.247px;line-height:12px">BMW</div>
<div class="a t red" style="left:198px;top:802px;font-size:10px;letter-spacing:0.577px;line-height:12px">225I ACTIVE</div>
<div class="a t red" style="left:194px;top:814px;font-size:10px;letter-spacing:-0.079px;line-height:12px">TOURER</div>
<div class="a t red" style="left:290px;top:802px;font-size:10px;letter-spacing:0.738px;line-height:12px">1999-NL-Demo Abonnement</div>
<div class="a t red" style="left:477px;top:802px;font-size:10px;letter-spacing:0.687px;line-height:12px">Autoflex B.V.</div>
<div class="a t red" style="left:664px;top:802px;font-size:10px;letter-spacing:0.881px;line-height:12px">28-12-2021</div>
<div class="a t red" style="left:736px;top:802px;font-size:10px;letter-spacing:0.881px;line-height:12px">28-12-2021</div>
<div class="a t red" style="left:808px;top:802px;font-size:10px;letter-spacing:0.881px;line-height:12px">26-12-2024</div>
<div class="a t red" style="left:899px;top:802px;font-size:10px;letter-spacing:0.558px;line-height:12px">geen</div>
<div class="a t red" style="left:886px;top:814px;font-size:10px;letter-spacing:0.614px;line-height:12px">voorbeeld</div>
<div class="a" style="left:11px;top:826px;width:938px;height:25px;background:#ffffbb;border-bottom:1px solid #d2d2c8"></div>
<div class="a t red" style="left:15px;top:827px;font-size:10px;letter-spacing:0.718px;line-height:12px">1-XKD-81</div>
<div class="a t red" style="left:87px;top:827px;font-size:10px;letter-spacing:0.247px;line-height:12px">BMW</div>
<div class="a t red" style="left:198px;top:827px;font-size:10px;letter-spacing:0.577px;line-height:12px">225I ACTIVE</div>
<div class="a t red" style="left:194px;top:839px;font-size:10px;letter-spacing:-0.079px;line-height:12px">TOURER</div>
<div class="a t red" style="left:290px;top:827px;font-size:10px;letter-spacing:0.738px;line-height:12px">1999-NL-Demo Abonnement</div>
<div class="a t red" style="left:477px;top:827px;font-size:10px;letter-spacing:0.687px;line-height:12px">Autoflex B.V.</div>
<div class="a t red" style="left:664px;top:827px;font-size:10px;letter-spacing:0.881px;line-height:12px">28-12-2021</div>
<div class="a t red" style="left:736px;top:827px;font-size:10px;letter-spacing:0.881px;line-height:12px">28-12-2021</div>
<div class="a t red" style="left:808px;top:827px;font-size:10px;letter-spacing:0.881px;line-height:12px">27-12-2022</div>
<div class="a t red" style="left:899px;top:827px;font-size:10px;letter-spacing:0.558px;line-height:12px">geen</div>
<div class="a t red" style="left:886px;top:839px;font-size:10px;letter-spacing:0.614px;line-height:12px">voorbeeld</div>
<div class="a" style="left:11px;top:851px;width:938px;height:25px;background:#ffcc00;border-bottom:1px solid #d2d2c8"></div>
<div class="a t" style="left:15px;top:852px;font-size:10px;letter-spacing:0.576px;line-height:12px">1-TBJ-97</div>
<div class="a t" style="left:87px;top:852px;font-size:10px;letter-spacing:-0.222px;line-height:12px">OPEL</div>
<div class="a t" style="left:198px;top:852px;font-size:10px;letter-spacing:0.640px;line-height:12px">INSIGNIA</div>
<div class="a t" style="left:194px;top:864px;font-size:10px;letter-spacing:0.260px;line-height:12px">SPORTS...</div>
<div class="a t" style="left:290px;top:852px;font-size:10px;letter-spacing:0.738px;line-height:12px">1999-NL-Demo Abonnement</div>
<div class="a t" style="left:477px;top:852px;font-size:10px;letter-spacing:0.687px;line-height:12px">Autoflex B.V.</div>
<div class="a t" style="left:607px;top:852px;font-size:10px;letter-spacing:0.589px;line-height:12px">A28</div>
<div class="a t" style="left:578px;top:864px;font-size:10px;letter-spacing:0.689px;line-height:12px">Automatisering</div>
<div class="a t" style="left:664px;top:852px;font-size:10px;letter-spacing:0.881px;line-height:12px">17-03-2022</div>
<div class="a t" style="left:736px;top:852px;font-size:10px;letter-spacing:0.881px;line-height:12px">17-03-2022</div>
<div class="a t" style="left:808px;top:852px;font-size:10px;letter-spacing:0.881px;line-height:12px">16-03-2023</div>
<div class="a t" style="left:899px;top:852px;font-size:10px;letter-spacing:0.558px;line-height:12px">geen</div>
<div class="a t" style="left:886px;top:864px;font-size:10px;letter-spacing:0.614px;line-height:12px">voorbeeld</div>
<div class="a" style="left:11px;top:876px;width:938px;height:24px;background:#ffffbb;"></div>
<div class="a t" style="left:15px;top:877px;font-size:10px;letter-spacing:0.682px;line-height:12px">1-KZF-28</div>
<div class="a t" style="left:87px;top:877px;font-size:10px;letter-spacing:0.635px;line-height:12px">Volvo</div>
<div class="a t" style="left:198px;top:877px;font-size:10px;letter-spacing:0.589px;line-height:12px">V40</div>
<div class="a t" style="left:290px;top:877px;font-size:10px;letter-spacing:0.716px;line-height:12px">1999-EU-Demo Abonnement</div>
<div class="a t" style="left:477px;top:877px;font-size:10px;letter-spacing:0.687px;line-height:12px">Autoflex B.V.</div>
<div class="a t" style="left:604px;top:877px;font-size:10px;letter-spacing:0.522px;line-height:12px">Vries</div>
<div class="a t" style="left:664px;top:877px;font-size:10px;letter-spacing:0.881px;line-height:12px">30-01-2021</div>
<div class="a t" style="left:736px;top:877px;font-size:10px;letter-spacing:0.881px;line-height:12px">30-01-2021</div>
<div class="a t" style="left:808px;top:877px;font-size:10px;letter-spacing:0.881px;line-height:12px">29-01-2022</div>
<div class="a t" style="left:899px;top:877px;font-size:10px;letter-spacing:0.558px;line-height:12px">geen</div>
<div class="a t" style="left:886px;top:889px;font-size:10px;letter-spacing:0.614px;line-height:12px">voorbeeld</div>
<div class="a" style="left:82px;top:276px;width:1px;height:624px;background:#c8c8c8"></div>
<div class="a" style="left:193px;top:276px;width:1px;height:624px;background:#c8c8c8"></div>
<div class="a" style="left:286px;top:276px;width:1px;height:624px;background:#c8c8c8"></div>
<div class="a" style="left:440px;top:276px;width:1px;height:624px;background:#c8c8c8"></div>
<div class="a" style="left:575px;top:276px;width:1px;height:624px;background:#c8c8c8"></div>
<div class="a" style="left:655px;top:276px;width:1px;height:624px;background:#c8c8c8"></div>
<div class="a" style="left:727px;top:276px;width:1px;height:624px;background:#c8c8c8"></div>
<div class="a" style="left:800px;top:276px;width:1px;height:624px;background:#c8c8c8"></div>
<div class="a" style="left:873px;top:276px;width:1px;height:624px;background:#c8c8c8"></div>
<div class="a" style="left:948px;top:276px;width:1px;height:624px;background:#d8d8d0"></div>
<div class="a" style="left:11px;top:899px;width:937px;height:1px;background:#ecebd8"></div>
<div class="a" style="left:0;top:916px;width:992px;height:3px;background:#f0f0f5"></div>
<div class="a" style="left:17px;top:918px;width:975px;height:1px;background:#c2c2c2"></div>
</body></html>
